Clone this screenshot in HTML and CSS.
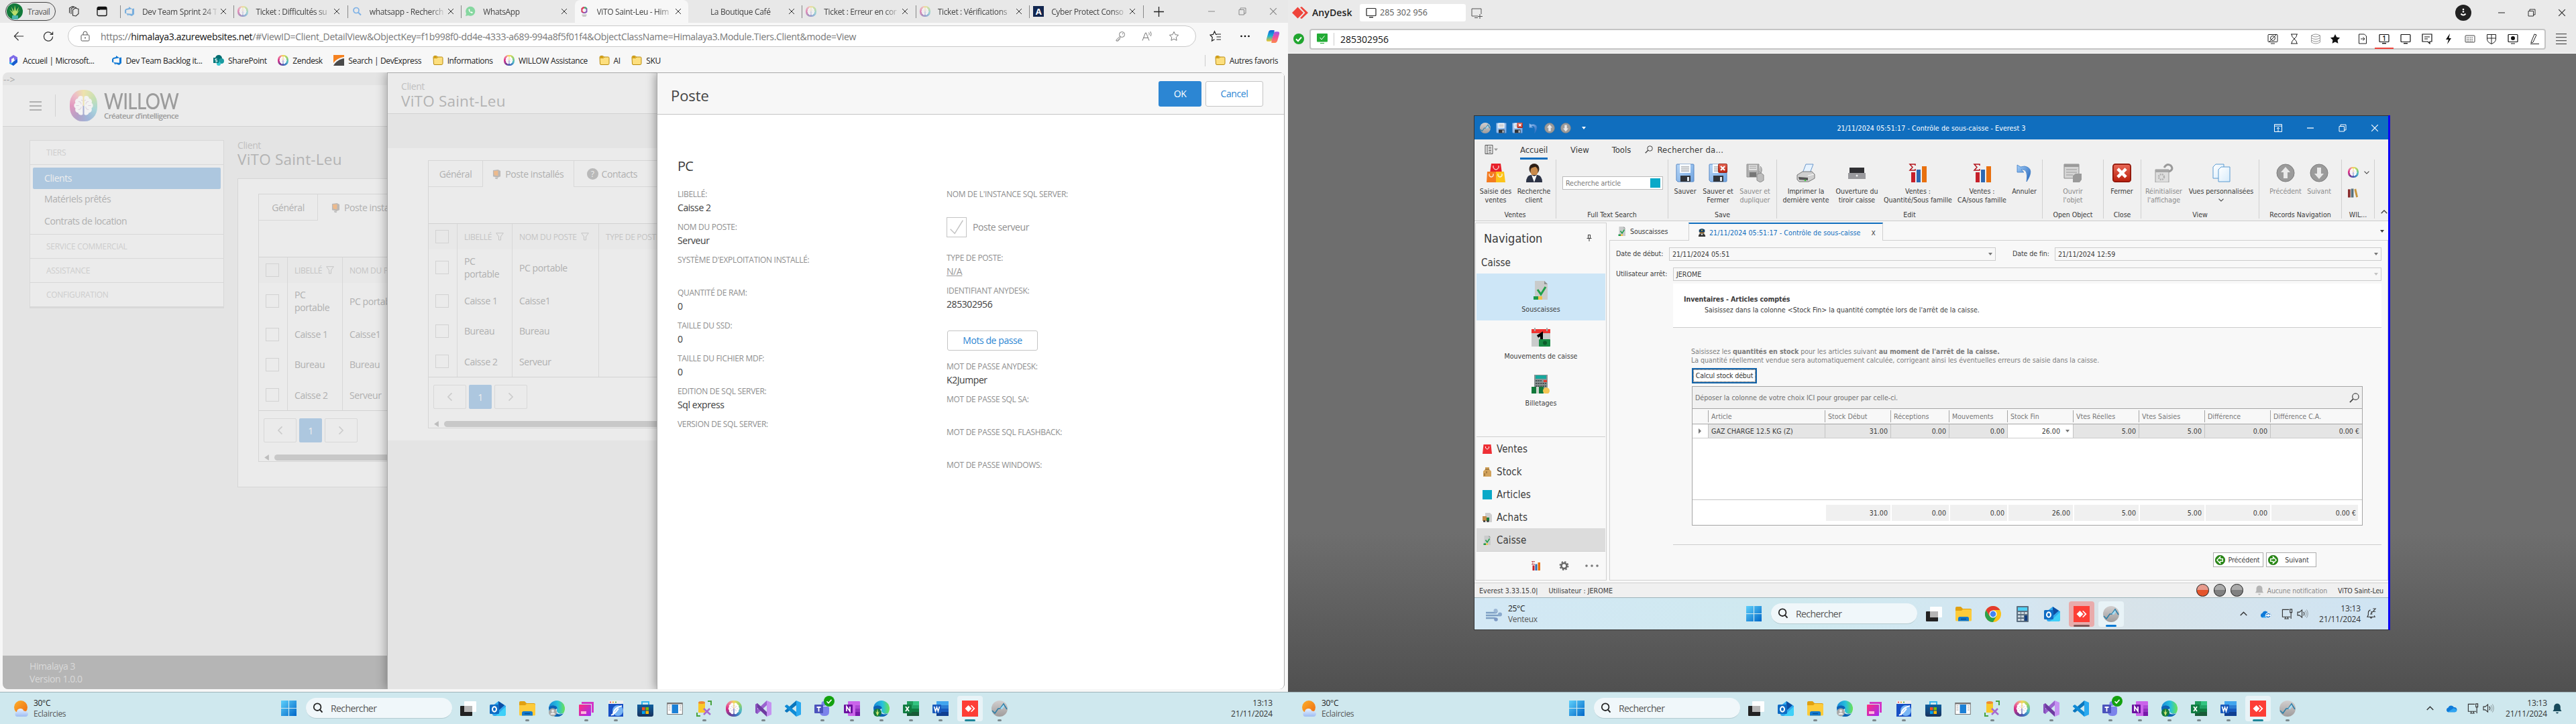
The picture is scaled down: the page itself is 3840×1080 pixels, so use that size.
FILE: index.html
```html
<!DOCTYPE html>
<html lang="fr">
<head>
<meta charset="utf-8">
<title>Himalaya 3 - AnyDesk</title>
<link rel="stylesheet" href="styles.css">
</head>
<body>
<svg class="defs" width="0" height="0">
<defs>
<linearGradient id="gWin" x1="0" y1="0" x2="1" y2="1"><stop offset="0" stop-color="#5ed0fb"/><stop offset="1" stop-color="#0067c8"/></linearGradient>
<linearGradient id="gSun" x1="0" y1="0" x2="1" y2="1"><stop offset="0" stop-color="#fdb02b"/><stop offset="1" stop-color="#ee6a10"/></linearGradient>
<linearGradient id="gCloud" x1="0" y1="0" x2="0" y2="1"><stop offset="0" stop-color="#e9f1ff"/><stop offset="1" stop-color="#9ebdf2"/></linearGradient>
<linearGradient id="gEdge" x1="0" y1="0" x2="1" y2="0"><stop offset="0" stop-color="#1788d8"/><stop offset=".55" stop-color="#27c0dc"/><stop offset="1" stop-color="#6be352"/></linearGradient>
<linearGradient id="gPink" x1="0" y1="0" x2="1" y2="1"><stop offset="0" stop-color="#ff2e7c"/><stop offset="1" stop-color="#a229f5"/></linearGradient>
<linearGradient id="gStore" x1="0" y1="0" x2="0" y2="1"><stop offset="0" stop-color="#0f5f9e"/><stop offset="1" stop-color="#17325e"/></linearGradient>
<linearGradient id="gGrey" x1="0" y1="0" x2="0" y2="1"><stop offset="0" stop-color="#d2cfcf"/><stop offset="1" stop-color="#9f9c9c"/></linearGradient>
<linearGradient id="gFloppy" x1="0" y1="0" x2="1" y2="1"><stop offset="0" stop-color="#b9d8f8"/><stop offset="1" stop-color="#6fa3e0"/></linearGradient>
<linearGradient id="gRed" x1="0" y1="0" x2="0" y2="1"><stop offset="0" stop-color="#ea6a58"/><stop offset="1" stop-color="#b91f0c"/></linearGradient>
<linearGradient id="gUndo" x1="0" y1="0" x2="1" y2="1"><stop offset="0" stop-color="#a5d0fa"/><stop offset="1" stop-color="#1c5fb8"/></linearGradient>
<linearGradient id="gCopA" x1="0" y1="0" x2="0" y2="1"><stop offset="0" stop-color="#1560d8"/><stop offset=".5" stop-color="#18b0d4"/><stop offset="1" stop-color="#f3c62a"/></linearGradient>
<linearGradient id="gCopB" x1="0" y1="0" x2="0" y2="1"><stop offset="0" stop-color="#9a58ec"/><stop offset=".5" stop-color="#f0509a"/><stop offset="1" stop-color="#fd8a4c"/></linearGradient>
<linearGradient id="gPaper" x1="0" y1="0" x2="1" y2="1"><stop offset="0" stop-color="#fff"/><stop offset="1" stop-color="#d6ebfb"/></linearGradient>

<symbol id="x" viewBox="0 0 10 10"><path d="M1 1l8 8M9 1l-8 8" fill="none" stroke="currentColor"/></symbol>
<symbol id="brain" viewBox="0 0 24 24"><path fill="#fff" d="M11.400 4.200c-1.800-1.400-4.200-.4-4.300 1.600-2 .3-3 2.200-2.100 3.900-1.700 1-1.700 3.600 0 4.600-.7 1.900.4 3.700 2.200 3.900.5 2.100 2.900 2.700 4.200 1.400zM12.600 4.200c1.800-1.400 4.200-.4 4.300 1.600 2 .3 3 2.200 2.100 3.900 1.700 1 1.700 3.600 0 4.600.7 1.900-.4 3.700-2.200 3.900-.5 2.100-2.900 2.700-4.200 1.400z"/><path d="M7.500 8.500q2.500 0 2.500 2.500M7.500 15.500q2.500 0 2.500-2.500M16.500 8.500q-2.500 0-2.500 2.500M16.500 15.500q-2.500 0-2.500-2.500M10 7l1.300 1M14 7l-1.300 1M5.500 12H8M18.500 12H16" fill="none" stroke="#c9a9c8" stroke-width=".6"/></symbol>
<symbol id="devops" viewBox="0 0 16 16"><path fill="currentColor" d="M15 3.600v8.600l-3.400 2.800-5.400-2v2L3.200 11l8.700.7V4.200zM12 4.200L7 1v2L2.500 4.300 1 6.200v4.200l2.200 1V5.900z"/></symbol>
<symbol id="folder" viewBox="0 0 16 16"><path d="M1 3.500Q1 1.500 3 1.500h2.500q1 0 1.500 1.500h6.500q1.500 0 1.500 1.500v8q0 2-2 2h-10q-1.500 0-1.500-1.500z" fill="#fddf7e" stroke="#b98a0c"/><path d="M1.500 4.500h5L8 3" stroke="#b98a0c" fill="none"/><path d="M1.500 3q0-1 1-1h3l1 1.500-1 1h-4z" fill="#d9a51b"/></symbol>
<symbol id="back" viewBox="0 0 18 18"><path d="M17 9H2M8.500 2L1.500 9l7 7" fill="none" stroke="currentColor" stroke-width="1.300"/></symbol>
<symbol id="reload" viewBox="0 0 18 18"><path d="M16 9a7 7 0 1 1-2.300-5.200L16 5.500M16 1.500v4.200h-4.200" fill="none" stroke="currentColor" stroke-width="1.300"/></symbol>
<symbol id="lock" viewBox="0 0 14 16"><rect x="1" y="6" width="12" height="9" rx="1.500" fill="none" stroke="currentColor"/><path d="M4 6V4a3 3 0 0 1 6 0v2" fill="none" stroke="currentColor"/><circle cx="7" cy="10.500" r="1" fill="currentColor"/></symbol>
<symbol id="star" viewBox="0 0 18 18"><path d="M9 1.500l2.300 4.900 5.200.7-3.800 3.700.9 5.300L9 13.600l-4.600 2.500.9-5.300L1.500 7.100l5.200-.7z" fill="none" stroke="currentColor" stroke-width="1.100"/></symbol>
<symbol id="starF" viewBox="0 0 18 18"><path d="M9 1l2.500 5.300 5.500.7-4 4 1 5.700L9 14l-5 2.700 1-5.700-4-4 5.500-.7z" fill="currentColor"/></symbol>
<symbol id="favs" viewBox="0 0 18 18"><path d="M11 6.400H9.600L7.500 1.800 5.400 6.400l-4.400.7 3.300 3.700-.8 5.300 4-2.300M11 6h6M10.500 10H17M10.500 14H17" fill="none" stroke="currentColor" stroke-width="1.200"/></symbol>
<symbol id="key" viewBox="0 0 16 16"><circle cx="10.500" cy="5.500" r="4" fill="none" stroke="currentColor"/><path d="M7.600 8.200L2 13.500V15h3v-2h2v-2l1.800-1.800" fill="none" stroke="currentColor"/><circle cx="11.500" cy="4.500" r=".8" fill="currentColor"/></symbol>
<symbol id="aloud" viewBox="0 0 16 16"><path d="M1 14.500L5.500 3h1L11 14.500M2.700 10.500h6.700M10.500 2.500q1.500 2 .3 4M12.800 1q2.400 3.500.5 7" fill="none" stroke="currentColor"/></symbol>
<symbol id="copilot" viewBox="0 0 22 22"><path d="M13 2H8Q5.500 2 4.600 5L2 14q-1 4 2 4h3q2 0 2.600-2L13 5z" fill="url(#gCopA)"/><path d="M9 20h5q2.500 0 3.400-3L20 8q1-4-2-4h-3q-2 0-2.600 2L9 17z" fill="url(#gCopB)"/></symbol>
<symbol id="max" viewBox="0 0 12 12"><path d="M1 3.500h7.500V11H1zM3 3.500V1h8v8H8.500" fill="none" stroke="currentColor"/></symbol>
<symbol id="filter" viewBox="0 0 12 12"><path d="M.7.7h10.600L7.500 6v5h-3V6z" fill="none" stroke="currentColor"/></symbol>
<symbol id="search" viewBox="0 0 18 18"><circle cx="8" cy="7.500" r="6" fill="none" stroke="currentColor" stroke-width="2"/><path d="M12.300 12l4 4.500" stroke="currentColor" stroke-width="2.200"/></symbol>
<symbol id="mag" viewBox="0 0 16 16"><circle cx="10" cy="6" r="5" fill="none" stroke="currentColor" stroke-width="1.300"/><path d="M6.500 9.500L1 15" stroke="currentColor" stroke-width="1.800"/></symbol>
<symbol id="down" viewBox="0 0 6 4"><path d="M0 0h6L3 4z" fill="currentColor"/></symbol>
<symbol id="chev" viewBox="0 0 10 6"><path d="M.7 5.300L5 1l4.300 4.300" fill="none" stroke="currentColor" stroke-width="1.300"/></symbol>
<symbol id="mon" viewBox="0 0 16 16"><rect x="1" y="1.500" width="14" height="11" rx="1" fill="none" stroke="currentColor" stroke-width="1.200"/><path d="M5 14.700h6" stroke="currentColor" stroke-width="1.400"/></symbol>
<symbol id="poste" viewBox="0 0 14 16"><path d="M1 1.500l8-1 4 2v9l-5 2-7-2z" fill="#8d8783"/><path d="M2 3l7-1v8.500L3 9.500z" fill="#f08b30"/><path d="M4 13.500l5 .5-1 1.700-3-.3z" fill="#888"/></symbol>

<symbol id="win" viewBox="0 0 24 24"><path d="M0 0h11.400v11.400H0zM12.600 0H24v11.400H12.600zM0 12.600h11.400V24H0zM12.600 12.600H24V24H12.600z" fill="url(#gWin)"/></symbol>
<symbol id="taskview" viewBox="0 0 24 24"><rect x="0" y="8" width="18" height="15" rx="1" fill="#222"/><rect x="6" y="1" width="18" height="16" rx="1" fill="#fff" opacity=".95"/><rect x="6" y="8" width="12" height="9" fill="#b5b5b5"/></symbol>
<symbol id="outlook" viewBox="0 0 24 24"><path d="M4 8l9-7 11 7v12q0 3-3 3H7q-3 0-3-3z" fill="#2fa9ee"/><path d="M24 9v11q0 3-3 3H9z" fill="#3fd0f8"/><path d="M13 1l9 6-9 8z" fill="#0d4da3"/><rect y="6" width="14" height="14" rx="1.500" fill="#0f6cc4"/><ellipse cx="7" cy="13" rx="3" ry="3.700" fill="none" stroke="#fff" stroke-width="2"/></symbol>
<symbol id="explorer" viewBox="0 0 24 24"><path d="M0 3q0-2 2-2h6l3 3h11q2 0 2 2v4H0z" fill="#e0a011"/><path d="M0 7h9l2-2h11q2 0 2 2v14q0 1.500-2 1.500H2q-2 0-2-1.500z" fill="#fdcb3a"/><path d="M4 22.500v-4q0-2.500 2.500-2.500h11q2.500 0 2.500 2.500v4z" fill="#1179cf"/><path d="M8 19.500h8" stroke="#0a4f8f" stroke-width="1.500"/></symbol>
<symbol id="edge" viewBox="0 0 24 24"><circle cx="12" cy="12" r="12" fill="url(#gEdge)"/><path d="M.2 10Q4 5 10 8q4 2 2 6-1 6 8 5.500 1 0 2-.5-4 6-12 4.900Q1 21 .2 10z" fill="#0d62b4"/><path d="M10 8q5 0 5 4.500-1 2-1 3.500h6q4-1 4-4Q23 7 17 5q-8-2-16 4 5-3 9-1z" fill="url(#gEdge)"/><path d="M12.500 12q-2 6 4 7.500 3 .5 6-1-2 2-5 2-7 0-8-5 0-3 3-3.500z" fill="#d3eef4"/></symbol>
<symbol id="badgeP" viewBox="0 0 24 24"><circle cx="6" cy="17.500" r="6" fill="#a8a8a8"/><circle cx="6" cy="15.500" r="2" fill="#e8e8e8"/><path d="M2.500 21q0-3 3.500-3t3.500 3" fill="#e8e8e8"/></symbol>
<symbol id="badgeL" viewBox="0 0 24 24"><circle cx="6" cy="18" r="6" fill="#147a3c"/><path d="M6 23l-3-7 2 2 1-6 1 6 2-2z" fill="#cde870"/></symbol>
<symbol id="pink" viewBox="0 0 24 24"><path d="M5 2h18v16h-3V5H5z" fill="#d436c8"/><rect x="1" y="6" width="18" height="17" rx="1" fill="url(#gPink)"/><path d="M4 16h8v4H4z" fill="#ffb5dd"/></symbol>
<symbol id="globe" viewBox="0 0 24 24"><rect x="1" y="0" width="22" height="24" fill="#174fc4"/><rect x="1" width="22" height="5" fill="#eee"/><circle cx="4" cy="2.500" r="1" fill="#e33"/><circle cx="8" cy="2.500" r="1" fill="#e90"/><circle cx="12" cy="2.500" r="1" fill="#3a3"/><circle cx="15" cy="15" r="8" fill="#78b5f4"/><path d="M8 22q0-11 13-14M5 22l6-4 5-6" fill="none" stroke="#fff" stroke-width="2"/></symbol>
<symbol id="store" viewBox="0 0 24 24"><path d="M7 6V2h10v4" fill="none" stroke="#35b6ee" stroke-width="2"/><path d="M0 6h24v15q0 3-3 3H3q-3 0-3-3z" fill="url(#gStore)"/><path d="M7 10h4.500v4.500H7z" fill="#f25022"/><path d="M12.500 10H17v4.500h-4.500z" fill="#7fba00"/><path d="M7 15.500h4.500V20H7z" fill="#00a4ef"/><path d="M12.500 15.500H17V20h-4.500z" fill="#ffb900"/></symbol>
<symbol id="winapp" viewBox="0 0 24 24"><rect x=".7" y="3.500" width="22.600" height="17" fill="#fff" stroke="#777"/><path d="M.7 4.500h22.600" stroke="#777" stroke-width="2"/><rect x="7.500" y="6" width="9.500" height="13" fill="#1b80d6"/><path d="M2.500 8h3M2.500 11h3M2.500 14h3M19 8h2.500M19 11h2.500M19 14h2.500" stroke="#999"/></symbol>
<symbol id="dbtool" viewBox="0 0 24 24"><path d="M3 3h10v15H3z" fill="#f9c929"/><ellipse cx="8" cy="3" rx="5" ry="2" fill="#ef8a31"/><path d="M17 1h5v6M1 18v5h5" fill="none" stroke="#48a23f" stroke-width="2"/><path d="M11 12l10 9M20 12l-9 9" stroke="#a76bd0" stroke-width="2.500"/></symbol>
<symbol id="vs" viewBox="0 0 24 24"><path d="M17 0l7 3v18l-7 3z" fill="#c592f1"/><path d="M17 0v7L3 20l-3-2V16z" fill="#9a63cf"/><path d="M17 24v-7L3 4 0 6v2z" fill="#6d3ba0"/><path d="M0 6v12l3 2V4z" fill="#8750bd"/></symbol>
<symbol id="vscode" viewBox="0 0 24 24"><path d="M17 0l7 3v18l-7 3z" fill="#29a9f0"/><path d="M17 0v7L3 18l-3-2V15z" fill="#0a76bd"/><path d="M17 24v-7L3 6 0 8v1z" fill="#0f8bd6"/></symbol>
<symbol id="teams" viewBox="0 0 24 24"><circle cx="14" cy="4.500" r="3.500" fill="#7b83eb"/><path d="M8 9h12q2 0 2 2v6q0 6-7 6t-7-6z" fill="#7b83eb"/><rect y="6" width="13" height="13" rx="1" fill="#4b53bc"/><path d="M3.500 10h6M6.500 10v6.500" stroke="#fff" stroke-width="1.800"/></symbol>
<symbol id="teamsOk" viewBox="0 0 16 16"><circle cx="8" cy="8" r="8" fill="#13a10e"/><path d="M4.500 8.300l2.500 2.500 4.500-5" fill="none" stroke="#fff" stroke-width="1.600"/></symbol>
<symbol id="onenote" viewBox="0 0 24 24"><rect x="6" y="1" width="18" height="22" rx="1" fill="#ca64ea"/><path d="M17 7h7v5h-7z" fill="#ae4bd5"/><path d="M17 12h7v5h-7z" fill="#9332bf"/><path d="M17 17h7v6h-7z" fill="#7719aa"/><rect y="6" width="13" height="13" rx="1" fill="#6b12a0"/><path d="M4 16V9l5 7V9" fill="none" stroke="#fff" stroke-width="1.700"/></symbol>
<symbol id="excel" viewBox="0 0 24 24"><path d="M6 1h9v22H6z" fill="#1f9b5c"/><path d="M15 1h9v6h-9z" fill="#33c481"/><path d="M6 7h18v5H6z" fill="#21a366"/><path d="M6 12h18v5H6z" fill="#107c41"/><path d="M6 17h18v6H6z" fill="#185c37"/><rect y="6" width="13" height="13" rx="1" fill="#107c41"/><path d="M4 9l5 7M9 9l-5 7" stroke="#fff" stroke-width="1.800"/></symbol>
<symbol id="word" viewBox="0 0 24 24"><path d="M6 1h18v6H6z" fill="#41a5ee"/><path d="M6 7h18v5H6z" fill="#2b7cd3"/><path d="M6 12h18v5H6z" fill="#185abd"/><path d="M6 17h18v6H6z" fill="#103f91"/><rect y="6" width="13" height="13" rx="1" fill="#185abd"/><path d="M2.500 9l2 7 2-6 2 6 2-7" fill="none" stroke="#fff" stroke-width="1.600"/></symbol>
<symbol id="any" viewBox="0 0 24 24"><rect width="24" height="24" fill="#fd3e36"/><path d="M4.500 12l5-5 5 5-5 5zM13 7.500L14.500 7l5 5-5 5-1.500-.5L17 12z" fill="#fff"/></symbol>
<symbol id="everest" viewBox="0 0 24 24"><circle cx="12" cy="12" r="12" fill="url(#gGrey)"/><path d="M1 15l4 4 5-7h3l5-7 5 8" fill="none" stroke="#2b7fa8" stroke-width="1.600"/><path d="M13 12l5-6 1 3-3 4z" fill="#a4dcf5"/></symbol>
<symbol id="sunny" viewBox="0 0 24 24"><circle cx="11" cy="10" r="10" fill="url(#gSun)"/><path d="M5 24a4 4 0 0 1 0-7.500 5.500 5.500 0 0 1 10.500-1q5 0 6.500 4-.5 4.500-4 4.500z" fill="url(#gCloud)"/></symbol>
<symbol id="wind" viewBox="0 0 24 24"><path d="M0 10h14q2.500 0 2.500-3M0 14h19q3-.5 3-2.500M0 18h13q2 .5 3 3" fill="none" stroke="#7e9fc4" stroke-width="2.400"/><circle cx="14.500" cy="7" r="3" fill="#9db8d6"/><circle cx="21" cy="12.500" r="3" fill="#8aa9cc"/><circle cx="15" cy="20" r="2.800" fill="#7b98c4"/></symbol>
<symbol id="chrome" viewBox="0 0 24 24"><circle cx="12" cy="12" r="12" fill="#fbc116"/><path d="M1.600 6A12 12 0 0 1 22.400 6H12z" fill="#e33b2e"/><path d="M1.600 6A12 12 0 0 0 12 24l5-9-10 0z" fill="#2ba24c"/><path d="M1.600 6L7 15l5-9z" fill="#e33b2e"/><circle cx="12" cy="12" r="5.600" fill="#fff"/><circle cx="12" cy="12" r="4.400" fill="#4285f4"/></symbol>
<symbol id="calc" viewBox="0 0 24 24"><rect x="3" width="18" height="24" rx="1" fill="#5c6f80"/><rect x="5" y="2" width="14" height="5" fill="#4fd0f5"/><path d="M5 9h4v3H5zM10 9h4v3h-4zM15 9h4v3h-4zM5 14h4v3H5zM10 14h4v3h-4zM5 19h4v3H5zM10 19h4v3h-4z" fill="#c9d4dc"/><path d="M15 14h4v8h-4z" fill="#123c7e"/></symbol>
<symbol id="cloud" viewBox="0 0 18 12"><path d="M4 11.500a3.700 3.700 0 0 1-.3-7.200A5 5 0 0 1 12.700 4a3.800 3.800 0 0 1 1.800 7.500z" fill="#0f7ad8"/><path d="M3 11.500L12 5.500q5 .5 5 4-.5 2-2.500 2z" fill="#2ea4f2"/></symbol>
<symbol id="sync" viewBox="0 0 18 12"><circle cx="13" cy="8" r="4.500" fill="#fff"/><path d="M10 7.500q3-4 6-.5M16 9q-3 3.500-6 .5" fill="none" stroke="#0f6cc4" stroke-width="1.400"/></symbol>
<symbol id="net" viewBox="0 0 18 18"><path d="M12 2.500H1.500V14H14M4.500 17h7M6 14v3M10 14v3M13.500 2h3v5h-3zM15 7v10" fill="none" stroke="currentColor" stroke-width="1.200"/></symbol>
<symbol id="snd" viewBox="0 0 18 16"><path d="M1 5.500h3L8 2v12l-4-3.500H1z" fill="none" stroke="currentColor" stroke-width="1.200"/><path d="M10.500 5q2 3 0 6" fill="none" stroke="currentColor" stroke-width="1.200"/><path d="M13 3.200q3.500 4.800 0 9.600M15.300 1.500q4 6.500 0 13" fill="none" stroke="currentColor" opacity=".45"/></symbol>
<symbol id="bell" viewBox="0 0 14 16"><path d="M7 .5a4.800 4.800 0 0 1 4.800 4.800V9L13.500 12H.5L2.200 9V5.300A4.800 4.800 0 0 1 7 .5zM5 13.500h4q-.5 2-2 2t-2-2z" fill="currentColor"/></symbol>
<symbol id="bellz" viewBox="0 0 16 18"><path d="M6 3Q2.500 4 2.500 8v3L1 14h12l-1-2M5.500 14.500q1.500 3 3 0M10 1h4l-4 4.500h4M6.500 6H9L6.500 9.500H9" fill="none" stroke="currentColor" stroke-width="1.200"/></symbol>

<symbol id="floppy" viewBox="0 0 28 28"><path d="M2 1h24q1 0 1 1v24q0 1-1 1H3l-2-2V2q0-1 1-1z" fill="url(#gFloppy)" stroke="#5486c4"/><path d="M6 1h16v13H6z" fill="#f6fafe"/><path d="M8 5h12M8 8h12M8 11h12" stroke="#8a8a8a"/><path d="M7 18h15v9H7z" fill="#30343a"/><path d="M17 20h3v6h-3z" fill="#dfe7ee"/></symbol>
<symbol id="floppyG" viewBox="0 0 28 28"><path d="M2 1h18v19H2z" fill="#b0b0b0" stroke="#8f8f8f"/><path d="M5 2h12v8H5z" fill="#e2e2e2"/><path d="M6 4h10M6 7h10" stroke="#999"/><path d="M6 13h10v7H6z" fill="#777"/><path d="M22 4q4 4 1 10l-3-2M17 16l6-2 4 3v8l-5 3-5-3z" fill="#bcbcbc" stroke="#8c8c8c"/></symbol>
<symbol id="rx" viewBox="0 0 16 16"><rect x=".5" y=".5" width="15" height="15" rx="2" fill="url(#gRed)" stroke="#8f1508"/><path d="M4.500 4.500l7 7M11.500 4.500l-7 7" stroke="#fff" stroke-width="2.600"/></symbol>
<symbol id="bags" viewBox="0 0 28 28"><path d="M7 0h14l2 14H5z" fill="#e8202a"/><path d="M1 12h13v16H0z" fill="#f47b20"/><path d="M14 12h12l2 16H14z" fill="#fcc419"/><path d="M10 3v3q4 6 8 0V3M4 15v3q3 4 6 0v-3M17 15v3q3 4 6 0v-3" fill="none" stroke="#fff" stroke-opacity=".8" stroke-width="1.300"/></symbol>
<symbol id="client" viewBox="0 0 28 28"><ellipse cx="14" cy="8" rx="7.500" ry="8" fill="#3a2a20"/><ellipse cx="14" cy="11.500" rx="5.500" ry="7" fill="#c98a4b"/><path d="M7 7q7-1 9-3 3 3 5 3-1-6-7-6T7 7z" fill="#2c1e16"/><path d="M2 28q0-10 7-11h10q7 1 7 11z" fill="#2c3346"/><path d="M10 17l4 11 4-11-4 2z" fill="#fff"/></symbol>
<symbol id="printer" viewBox="0 0 28 28"><path d="M9 14L14 1h11l-5 13z" fill="#e7f3ff" stroke="#6a97c9"/><path d="M1 17l8-5h14l4 4v6l-9 5H4l-3-3z" fill="#cfcfcf" stroke="#777"/><path d="M3 20l14 1v4L4 24z" fill="#555"/><path d="M17 18l9-2" stroke="#fff"/><circle cx="13" cy="25" r="1.200" fill="#3c3"/></symbol>
<symbol id="drawer" viewBox="0 0 28 28"><path d="M3 6h22v8H3z" fill="#2f2f33"/><path d="M1 14h26v9H1z" fill="#9a9a9e"/><circle cx="14" cy="18" r="1.500" fill="#eee"/></symbol>
<symbol id="stats" viewBox="0 0 28 28"><path d="M10 3V1H2l4 4.500L2 10h8V8" fill="none" stroke="#b3121b" stroke-width="1.500"/><rect x="4" y="13" width="6" height="15" fill="#c6202a"/><rect x="12" y="9" width="6" height="19" fill="#2d68b2"/><rect x="20" y="4" width="7" height="24" fill="#e8700f"/></symbol>
<symbol id="undo" viewBox="0 0 28 28"><path d="M3 2v11h10L9 9q11-2 8 18 13-20-3-23L8 5z" fill="url(#gUndo)" stroke="#3f7cc4" stroke-width=".8"/></symbol>
<symbol id="obj" viewBox="0 0 28 28"><path d="M1 1h22v21H1z" fill="#d5d5d5" stroke="#8a8a8a"/><path d="M1 1h22v4H1z" fill="#9b9b9b"/><path d="M4 9h16M4 13h16M4 17h10" stroke="#999"/><path d="M14 18l4-3h9v9l-3 4H14z" fill="#9a9a9a"/></symbol>
<symbol id="reset" viewBox="0 0 28 28"><path d="M1 9h20v19H1z" fill="#dedede" stroke="#999"/><path d="M1 9h20v4H1z" fill="#a7a7a7"/><circle cx="10" cy="20" r="4" fill="none" stroke="#b2b2b2" stroke-width="2.500" stroke-dasharray="2 1.200"/><path d="M14 6q4-7 10-3 5 6-3 9" fill="none" stroke="#9a9a9a" stroke-width="3"/></symbol>
<symbol id="pages" viewBox="0 0 28 28"><path d="M2 5l4-4h12v21H2z" fill="url(#gPaper)" stroke="#5b9ad0"/><path d="M10 9l4-4h13v22H10z" fill="url(#gPaper)" stroke="#5b9ad0"/></symbol>
<symbol id="upG" viewBox="0 0 28 28"><circle cx="14" cy="14" r="13" fill="#9b9b9b" stroke="#7c7c7c"/><path d="M14 5l7 8h-4v9h-6v-9H7z" fill="#e9e9e9"/></symbol>
<symbol id="books" viewBox="0 0 16 14"><path d="M0 1h4v13H0z" fill="#8a3030"/><path d="M5 0h4v14H5z" fill="#56707c"/><path d="M10 1l3-1 3 13-3 1z" fill="#c9973d"/></symbol>
<symbol id="sheet" viewBox="0 0 28 28"><path d="M5 0h14l5 5v23H5z" fill="#c9cbcb"/><path d="M19 0l5 5h-5z" fill="#8d9090"/><path d="M9 13l5 7 7-11" fill="none" stroke="#21a04a" stroke-width="3"/><path d="M3 23h7v5H3z" fill="#1c9947"/><path d="M10 23h6v5h-6z" fill="#f1c14b"/></symbol>
<symbol id="cal" viewBox="0 0 28 28"><path d="M0 2h28v26H0z" fill="#c9cbcb"/><path d="M0 2h28v6H0z" fill="#ee3330"/><path d="M5 0v5M23 0v5" stroke="#aaa" stroke-width="2"/><path d="M9 13l6-4v18" fill="none" stroke="#000" stroke-width="4"/><rect x="11" y="17" width="17" height="11" rx="1" fill="#178a43"/><circle cx="20" cy="22.500" r="3" fill="#0c5c2b"/></symbol>
<symbol id="bill" viewBox="0 0 28 28"><path d="M4 0h20v22H4z" fill="#8a9494"/><path d="M6 1h16v5H6z" fill="#16a89e"/><path d="M6 9h9M6 13h16M6 17h16" stroke="#4a5454" stroke-width="2" stroke-dasharray="2.500 1"/><path d="M18 8h5v3h-5z" fill="#e83b2e"/><path d="M0 18h18v10H0z" fill="#12793b"/><path d="M7 18h4v10H7z" fill="#cfd6cf"/><circle cx="22" cy="24" r="5" fill="#f4c655"/></symbol>
<symbol id="bag" viewBox="0 0 14 14"><path d="M1.500 0h11L14 14H0z" fill="#ee2f35"/><path d="M4.500 3v2q2.500 4 5 0V3" fill="none" stroke="#fff"/></symbol>
<symbol id="sack" viewBox="0 0 14 14"><path d="M4 0h6v3l3 3v8H1V6l3-3z" fill="#d2a35c"/><path d="M4 3h6M3 9v4M6 6v3" stroke="#7d5724"/></symbol>
<symbol id="truck" viewBox="0 0 14 14"><path d="M4 0h7l3 3v11H4z" fill="#cfcfcf"/><path d="M0 5h6v7H0z" fill="#c48c4a"/><path d="M6 7h4v5H6z" fill="#1c7c3e"/><circle cx="2.500" cy="12.500" r="1.500" fill="#333"/><circle cx="8" cy="12.500" r="1.500" fill="#333"/></symbol>
<symbol id="gear" viewBox="0 0 14 14"><circle cx="7" cy="7" r="4" fill="none" stroke="#666" stroke-width="2.600"/><circle cx="7" cy="7" r="6" fill="none" stroke="#666" stroke-width="1.800" stroke-dasharray="2.500 2.200"/></symbol>
<symbol id="pin" viewBox="0 0 8 10"><path d="M2 .5h4M2.500.5v5M5.500.5v5M.5 5.500h7M4 5.500V10" stroke="currentColor" fill="none"/></symbol>
<symbol id="police" viewBox="0 0 14 14"><path d="M2 2q5-4 10 0v4H2z" fill="#123e63"/><circle cx="7" cy="3" r="1.200" fill="#f1c232"/><path d="M3 6h8v3H3z" fill="#7b5a2a"/><path d="M1 14q0-5 4-5h4q4 0 4 5z" fill="#333"/><path d="M5 9l2 3 2-3z" fill="#eee"/></symbol>
<symbol id="green" viewBox="0 0 16 16"><circle cx="8" cy="8" r="7.500" fill="#2b8f17" stroke="#1c650e"/><path d="M3 8l5-5v3h4v4H8v3z" fill="none" stroke="#fff" stroke-width="1.500"/></symbol>
</defs>
</svg>

<div class="monitor">
  <div class="tabstrip">
    <div class="profile"><svg class="leaf" viewBox="0 0 24 24"><circle cx="12" cy="12" r="12" fill="#127a3a"/><path d="M12 20L4 9l5 4-2-8 4 7 1-9 2 9 4-7-2 8 4-4z" fill="#b9dd6c"/><path d="M8 18h9v6H8z" fill="#4cb5ad"/></svg><span>Travail</span></div>
    <svg class="ws" viewBox="0 0 16 16"><path d="M6.500 5.500l4-2.500 4.500 1.500v7l-4 3.500-4.500-1zM4 12V4l4-2.500 4 1M1.500 10.500V3L6 .7l3 .6" fill="none" stroke="#333" stroke-width="1.100"/></svg>
    <svg class="vt" viewBox="0 0 16 16"><rect x="1" y="1.500" width="14" height="13" rx="2" fill="none" stroke="#111" stroke-width="1.300"/><path d="M1 2h14v3.500H1zM1 2h4v4H1z" fill="#111"/></svg>
    <div class="tab"><svg class="i16 c-dev dim"><use href="#devops"/></svg><span>Dev Team Sprint 24 T</span><svg class="cx"><use href="#x"/></svg></div>
    <div class="tab"><i class="wl i16 dim"><svg><use href="#brain"/></svg></i><span>Ticket : Difficultés su</span><svg class="cx"><use href="#x"/></svg></div>
    <div class="tab"><svg class="i16" viewBox="0 0 16 16"><circle cx="7" cy="6.500" r="4" fill="none" stroke="#7fb2e6" stroke-width="1.700"/><path d="M10 9.500l4 4" stroke="#7fb2e6" stroke-width="2"/></svg><span>whatsapp - Recherch</span><svg class="cx"><use href="#x"/></svg></div>
    <div class="tab"><svg class="i16" viewBox="0 0 16 16"><path d="M1 15l1-4a7 7 0 1 1 3 3z" fill="#86d7a0"/><path d="M5.500 5q0 4.500 5.500 6l.8-1.800-2-1-1 .8Q7.500 8 7 7l.7-1-1-1.700z" fill="#fff"/></svg><span>WhatsApp</span><svg class="cx"><use href="#x"/></svg></div>
    <div class="tab on"><svg class="i16 big" viewBox="0 0 16 18"><path d="M3 4q5-5 10 0v6q-5 5-10 0z" fill="#8a55b8"/><path d="M3 4q5-5 5-1v8q-5 0-5-2z" fill="#e0405a"/><path d="M13 4q-3-4-5-2v3z" fill="#39b66b"/><circle cx="8" cy="7" r="3" fill="#f3f3f3"/><path d="M4 15h8M5 17h6" stroke="#999"/></svg><span>ViTO Saint-Leu - Him</span><svg class="cx"><use href="#x"/></svg></div>
    <div class="tab nosep"><i class="i16"></i><span>La Boutique Café</span><svg class="cx"><use href="#x"/></svg></div>
    <div class="tab"><i class="wl i16 dim"><svg><use href="#brain"/></svg></i><span>Ticket : Erreur en cor</span><svg class="cx"><use href="#x"/></svg></div>
    <div class="tab"><i class="wl i16 dim"><svg><use href="#brain"/></svg></i><span>Ticket : Vérifications</span><svg class="cx"><use href="#x"/></svg></div>
    <div class="tab"><b class="acro i16">A</b><span>Cyber Protect Conso</span><svg class="cx"><use href="#x"/></svg></div>
    <div class="newtab"><svg viewBox="0 0 14 14"><path d="M7 0v14M0 7h14" stroke="#222" stroke-width="1.200"/></svg></div>
    <div class="wbtns"><svg viewBox="0 0 12 12"><path d="M1 6h10" stroke="currentColor"/></svg><svg><use href="#max"/></svg><svg><use href="#x"/></svg></div>
  </div>
  <div class="toolbar">
    <svg class="t-back"><use href="#back"/></svg><svg class="t-rel"><use href="#reload"/></svg>
    <div class="addr"><svg class="lk"><use href="#lock"/></svg><p>https://<b>himalaya3.azurewebsites.net</b>/#ViewID=Client_DetailView&amp;ObjectKey=f1b998f0-dd4e-4333-a689-994a8f5f01f4&amp;ObjectClassName=Himalaya3.Module.Tiers.Client&amp;mode=View</p><svg><use href="#key"/></svg><svg><use href="#aloud"/></svg><svg><use href="#star"/></svg></div>
    <svg class="t-fav"><use href="#favs"/></svg><svg class="t-dot" viewBox="0 0 16 4"><circle cx="2.500" cy="2" r="1.300"/><circle cx="8" cy="2" r="1.300"/><circle cx="13.500" cy="2" r="1.300"/></svg><svg class="t-cop"><use href="#copilot"/></svg>
  </div>
  <div class="bookmarks">
    <a class="first"><svg viewBox="0 0 16 16"><path d="M8 0l6 3.500v6L9 7V4L5 6v6l-3-2V4z" fill="#7d6be8"/><path d="M2 10l3 2 5-3 4 1-6 6-6-3z" fill="#2aa7ea"/><path d="M9 9l5-3v5l-6 5-3-2z" fill="#1b5bd0"/></svg>Accueil | Microsoft...</a>
    <a><svg class="c-dev"><use href="#devops"/></svg>Dev Team Backlog it...</a>
    <a><svg viewBox="0 0 16 16"><circle cx="8" cy="5" r="5" fill="#036c70"/><circle cx="12" cy="9" r="4" fill="#1a9ba1"/><circle cx="8" cy="13" r="3" fill="#37c6d0"/><path d="M0 4h8v8H0z" fill="#03787c"/><path d="M5.500 6H3v2h2.500v2.200H3" fill="none" stroke="#fff"/></svg>SharePoint</a>
    <a><i class="wl"><svg><use href="#brain"/></svg></i>Zendesk</a>
    <a><svg viewBox="0 0 16 16"><path d="M0 0h16v3Q6 4 0 12z" fill="#f58220"/><path d="M16 5v11H0Q5 7 16 5z" fill="#4a4a4a"/></svg>Search | DevExpress</a>
    <a><svg><use href="#folder"/></svg>Informations</a>
    <a><i class="wl"><svg><use href="#brain"/></svg></i>WILLOW Assistance</a>
    <a><svg><use href="#folder"/></svg>AI</a>
    <a><svg><use href="#folder"/></svg>SKU</a>
    <a class="other"><svg><use href="#folder"/></svg>Autres favoris</a>
  </div>
  <div class="page">
    <div class="arrow">--&gt;</div>
    <div class="phead"><svg class="burger" viewBox="0 0 18 16"><path d="M0 2h18M0 8h18M0 14h18" stroke="#b0b0b0" stroke-width="2"/></svg><i class="vr"></i><i class="wl logo"><svg><use href="#brain"/></svg></i><div class="brand"><b>WILLOW</b><span>Créateur d’intelligence</span></div></div>
    <div class="pmain">
      <nav class="side"><h6>TIERS</h6><a class="on">Clients</a><a>Matériels prêtés</a><a class="last">Contrats de location</a><h6>SERVICE COMMERCIAL</h6><h6>ASSISTANCE</h6><h6>CONFIGURATION</h6></nav>
      <section class="detail">
        <small>Client</small><h2>ViTO Saint-Leu</h2>
        <div class="panel"><div class="box">
          <div class="ptabs"><span>Général</span><span class="cur"><svg><use href="#poste"/></svg>Poste installés</span></div>
          <div class="tbl">
            <div class="th"><i></i></div><div class="th">LIBELLÉ<svg><use href="#filter"/></svg></div><div class="th">NOM DU POSTE</div><div class="th"></div>
            <div><i></i></div><div>PC<br>portable</div><div>PC portable</div><div></div>
            <div><i></i></div><div>Caisse 1</div><div>Caisse1</div><div></div>
            <div><i></i></div><div>Bureau</div><div>Bureau</div><div></div>
            <div><i></i></div><div>Caisse 2</div><div>Serveur</div><div></div>
          </div>
          <div class="pager"><span><svg class="l"><use href="#chev"/></svg></span><b>1</b><span><svg class="r"><use href="#chev"/></svg></span></div>
          <div class="hscroll"><svg viewBox="0 0 6 8"><path d="M6 0v8L0 4z" fill="#bdbdbd"/></svg><i></i></div>
        </div></div>
      </section>
    </div>
    <footer>Himalaya 3<br>Version 1.0.0</footer>

    <div class="pop2">
      <header><small>Client</small><h2>ViTO Saint-Leu</h2></header>
      <div class="panel"><div class="box">
          <div class="ptabs"><span>Général</span><span class="cur"><svg><use href="#poste"/></svg>Poste installés</span><span class="ct"><em>?</em>Contacts</span></div>
          <div class="tbl">
            <div class="th"><i></i></div><div class="th">LIBELLÉ<svg><use href="#filter"/></svg></div><div class="th">NOM DU POSTE<svg><use href="#filter"/></svg></div><div class="th">TYPE DE POSTE</div>
            <div><i></i></div><div>PC<br>portable</div><div>PC portable</div><div></div>
            <div><i></i></div><div>Caisse 1</div><div>Caisse1</div><div></div>
            <div><i></i></div><div>Bureau</div><div>Bureau</div><div></div>
            <div><i></i></div><div>Caisse 2</div><div>Serveur</div><div></div>
          </div>
          <div class="pager"><span><svg class="l"><use href="#chev"/></svg></span><b>1</b><span><svg class="r"><use href="#chev"/></svg></span></div>
          <div class="hscroll"><svg viewBox="0 0 6 8"><path d="M6 0v8L0 4z" fill="#bdbdbd"/></svg><i></i></div>
      </div></div>
    </div>

    <div class="pop3">
      <header><h2>Poste</h2><button class="ok">OK</button><button>Cancel</button></header>
      <h3>PC</h3>
      <div class="form">
        <dl><dt>LIBELLÉ:</dt><dd>Caisse 2</dd><dt>NOM DU POSTE:</dt><dd>Serveur</dd><dt>SYSTÈME D'EXPLOITATION INSTALLÉ:</dt><dd></dd><dt>QUANTITÉ DE RAM:</dt><dd>0</dd><dt>TAILLE DU SSD:</dt><dd>0</dd><dt>TAILLE DU FICHIER MDF:</dt><dd>0</dd><dt>EDITION DE SQL SERVER:</dt><dd>Sql express</dd><dt>VERSION DE SQL SERVER:</dt></dl>
        <dl><dt>NOM DE L'INSTANCE SQL SERVER:</dt><dd class="gap1"></dd><dd class="chk"><svg viewBox="0 0 30 30"><path d="M5 18l7 7L25 4" fill="none" stroke="#c4c4c4" stroke-width="1.600"/></svg>Poste serveur</dd><dt>TYPE DE POSTE:</dt><dd><u>N/A</u></dd><dt>IDENTIFIANT ANYDESK:</dt><dd>285302956</dd><dd class="pw"><button>Mots de passe</button></dd><dt>MOT DE PASSE ANYDESK:</dt><dd>K2Jumper</dd><dt>MOT DE PASSE SQL SA:</dt><dd></dd><dt>MOT DE PASSE SQL FLASHBACK:</dt><dd></dd><dt>MOT DE PASSE WINDOWS:</dt></dl>
      </div>
    </div>
  </div>
  <div class="taskbar local">
    <svg class="wi"><use href="#sunny"/></svg><div class="wt"><b>30°C</b><br>Eclaircies</div>
    <svg class="start"><use href="#win"/></svg><div class="sbox"><svg><use href="#search"/></svg>Rechercher</div>
    <div class="apps"><a><svg><use href="#taskview"/></svg></a><a><svg><use href="#outlook"/></svg></a><a class="r"><svg><use href="#explorer"/></svg></a><a><svg viewBox="0 0 24 24"><use href="#edge"/><use href="#badgeP"/></svg></a><a class="r"><svg><use href="#pink"/></svg></a><a class="r"><svg><use href="#globe"/></svg></a><a><svg><use href="#store"/></svg></a><a><svg><use href="#winapp"/></svg></a><a class="r"><svg><use href="#dbtool"/></svg></a><a><i class="wl"><svg><use href="#brain"/></svg></i></a><a class="r"><svg><use href="#vs"/></svg></a><a><svg><use href="#vscode"/></svg></a><a class="r"><svg><use href="#teams"/></svg><svg class="okb"><use href="#teamsOk"/></svg></a><a class="r"><svg><use href="#onenote"/></svg></a><a class="r"><svg viewBox="0 0 24 24"><use href="#edge"/><use href="#badgeL"/></svg></a><a class="r"><svg><use href="#excel"/></svg></a><a class="r"><svg><use href="#word"/></svg></a><a class="r on"><svg><use href="#any"/></svg></a><a class="r"><svg><use href="#everest"/></svg></a></div>
    <div class="tray"><div class="clock">13:13<br>21/11/2024</div></div>
  </div>
</div>

<div class="monitor any">
  <div class="atitle"><svg class="alogo" viewBox="0 0 24 18"><path d="M0 9l8.500-8.500L17 9l-8.500 8.500zM12 1l2.500-1L24 9l-9.500 9L12 17l7.500-8z" fill="#ef443b"/></svg><b>AnyDesk</b><div class="atab"><svg><use href="#mon"/></svg>285 302 956</div><svg class="anew" viewBox="0 0 17 16"><path d="M10 12H1V1h14v8M5 14.500h5M13 9v7M10 12.500h7" fill="none" stroke="#555"/></svg>
    <div class="aw"><svg class="ava" viewBox="0 0 24 24"><circle cx="12" cy="12" r="12" fill="#222"/><circle cx="12" cy="7" r="1.300" fill="#fff"/><circle cx="12" cy="10.500" r="1.300" fill="#fff"/><path d="M8.500 13.500q3.500 4 7 0" fill="none" stroke="#fff" stroke-width="2"/></svg><svg viewBox="0 0 12 12"><path d="M1 6h10" stroke="#222"/></svg><svg><use href="#max"/></svg><svg><use href="#x"/></svg></div></div>
  <div class="abar"><svg class="aok" viewBox="0 0 16 16"><circle cx="8" cy="8" r="8" fill="#1fa52e"/><path d="M4 8.200l3 3 5-5.700" fill="none" stroke="#fff" stroke-width="2"/></svg>
    <div class="ain"><svg class="gm" viewBox="0 0 16 16"><rect width="16" height="12.500" rx="1" fill="#23ab35"/><path d="M4.500 6l2.500 3 4.500-5.500" fill="none" stroke="#fff"/><path d="M5 14.500h6" stroke="#23ab35"/></svg><span>285302956</span>
      <div class="aic"><svg viewBox="0 0 16 16"><rect x="1" y="1.500" width="14" height="11" rx="1" fill="none" stroke="#222"/><circle cx="8" cy="7" r="3.500" fill="none" stroke="#222"/><path d="M3 12L13 2M5 15h6" stroke="#222"/></svg><svg viewBox="0 0 16 16"><path d="M3 1h10M3 15h10M4 1q0 4 4 7-4 3-4 7M12 1q0 4-4 7 4 3 4 7" fill="none" stroke="#222"/></svg><svg viewBox="0 0 16 16"><path d="M1.500 3q6.500-4 13 0v10q-6.500 4-13 0zM1.500 3q6.500 4 13 0M1.500 6.500q6.500 4 13 0M1.500 10q6.500 4 13 0" fill="none" stroke="#999"/></svg><svg class="st"><use href="#starF"/></svg><svg viewBox="0 0 16 16"><path d="M2.500 1h8l3 3v11h-11zM5 8h6M8.500 5.500L11 8l-2.500 2.500" fill="none" stroke="#222"/></svg><div class="one"><svg><use href="#mon"/></svg><b>1</b></div><svg><use href="#mon"/></svg><svg viewBox="0 0 16 16"><path d="M1 1h14v11h-3v3l-3-3H1zM4 5h8M4 8h5" fill="none" stroke="#111" stroke-width="1.200"/></svg><svg viewBox="0 0 16 16"><path d="M10 0L4 9h4l-2 7 6-9H8.500z" fill="#111"/></svg><svg viewBox="0 0 16 16"><rect x="1" y="3" width="14" height="10" rx="1" fill="none" stroke="#444"/><path d="M3 6h10M3 8.500h10M3 11h10" stroke="#444" stroke-dasharray="1.500 1"/></svg><svg viewBox="0 0 16 16"><path d="M1.500 1.500h13V8q0 5-6.500 7.500Q1.500 13 1.500 8zM8 1.500v14M1.500 7h13" fill="none" stroke="#222"/></svg><svg viewBox="0 0 16 16"><rect x="1" y="1.500" width="14" height="11" rx="1" fill="none" stroke="#111" stroke-width="1.200"/><circle cx="8" cy="7" r="3" fill="#111"/><path d="M5 15h6" stroke="#111"/></svg><svg viewBox="0 0 16 16"><path d="M3 13L8 1l3 1-5 11-3 1zM2 15.500h13" fill="none" stroke="#222"/></svg></div>
    </div>
    <svg class="aham" viewBox="0 0 16 16"><path d="M0 .7h16M0 5.700h16M0 10.700h16M0 15.500h16" stroke="#333"/></svg></div>
  <div class="stage"><div class="remote">
    <div class="rtitle"><div class="qa"><svg><use href="#everest"/></svg><svg><use href="#floppy"/></svg><svg viewBox="0 0 28 28"><use href="#floppy"/><use href="#rx" x="13" y="-1" width="15" height="15"/></svg><svg><use href="#undo"/></svg><svg><use href="#upG"/></svg><svg class="flip"><use href="#upG"/></svg><svg class="car"><use href="#down"/></svg></div><p>21/11/2024 05:51:17 - Contrôle de sous-caisse - Everest 3</p><div class="rw"><svg viewBox="0 0 12 12"><path d="M.5.5h11v11H.5zM.5 3h11M6 11V5M4 7l2-2 2 2" fill="none" stroke="currentColor"/></svg><svg viewBox="0 0 12 12"><path d="M1 6h10" stroke="currentColor" stroke-width="1.300"/></svg><svg><use href="#max"/></svg><svg><use href="#x"/></svg></div></div>
    <div class="rtabs"><svg class="fm" viewBox="0 0 20 14"><path d="M1 .5h11v13H1zM4 .5v13M6 3.500h4M6 6h4M6 8.500h4M6 11h4" fill="none" stroke="#555"/><path d="M14 5.500h6L17 9z" fill="#999"/></svg><a class="on">Accueil</a><a>View</a><a>Tools</a><svg class="mg"><use href="#mag"/></svg><a class="s">Rechercher da...</a></div>
    <div class="ribbon">
      <div class="g" style="width:122px"><div class="bs" style="padding-left:3px"><a style="width:57px"><svg><use href="#bags"/></svg>Saisie des<br>ventes</a><a style="width:57px"><svg><use href="#client"/></svg>Recherche<br>client</a></div><p>Ventes</p></div>
      <div class="g" style="width:167px"><div class="bs"><div class="rs">Recherche article<i></i></div></div><p>Full Text Search</p></div>
      <div class="g" style="width:162px"><div class="bs" style="padding-left:2px"><a style="width:46px"><svg><use href="#floppy"/></svg>Sauver</a><a style="width:52px"><svg viewBox="0 0 28 28"><use href="#floppy"/><use href="#rx" x="14" y="0" width="14" height="14"/></svg>Sauver et<br>Fermer</a><a class="dis" style="width:58px"><svg><use href="#floppyG"/></svg>Sauver et<br>dupliquer</a></div><p>Save</p></div>
      <div class="g" style="width:396px"><div class="bs" style="padding-left:5px"><a style="width:76px"><svg><use href="#printer"/></svg>Imprimer la<br>dernière vente</a><a style="width:76px"><svg><use href="#drawer"/></svg>Ouverture du<br>tiroir caisse</a><a style="width:106px"><svg><use href="#stats"/></svg>Ventes :<br>Quantité/Sous famille</a><a style="width:85px"><svg><use href="#stats"/></svg>Ventes :<br>CA/sous famille</a><a style="width:41px"><svg><use href="#undo"/></svg>Annuler</a></div><p>Edit</p></div>
      <div class="g" style="width:91px"><div class="bs"><a class="dis" style="width:90px"><svg><use href="#obj"/></svg>Ouvrir<br>l'objet</a></div><p>Open Object</p></div>
      <div class="g" style="width:56px"><div class="bs"><a style="width:54px"><svg><use href="#rx"/></svg>Fermer</a></div><p>Close</p></div>
      <div class="g" style="width:176px"><div class="bs"><a class="dis" style="width:67px"><svg><use href="#reset"/></svg>Réinitialiser<br>l'affichage</a><a style="width:104px"><svg><use href="#pages"/></svg>Vues personnalisées<br><svg class="cv"><use href="#chev"/></svg></a></div><p>View</p></div>
      <div class="g" style="width:123px"><div class="bs" style="padding-left:12px"><a class="dis" style="width:54px"><svg><use href="#upG"/></svg>Précédent</a><a class="dis" style="width:46px"><svg class="flip"><use href="#upG"/></svg>Suivant</a></div><p>Records Navigation</p></div>
      <div class="g" style="width:49px"><div class="mini"><div><i class="wl i16"><svg><use href="#brain"/></svg></i><svg class="cv"><use href="#chev"/></svg></div><svg class="bk"><use href="#books"/></svg></div><p>WIL...</p></div>
      <svg class="fold"><use href="#chev"/></svg>
    </div>
    <div class="work">
      <aside>
        <div class="nt">Navigation<svg><use href="#pin"/></svg></div><div class="nc">Caisse</div>
        <div class="ni on"><svg><use href="#sheet"/></svg>Souscaisses</div><div class="ni"><svg><use href="#cal"/></svg>Mouvements de caisse</div><div class="ni"><svg><use href="#bill"/></svg>Billetages</div>
        <div class="ng"><a><svg><use href="#bag"/></svg>Ventes</a><a><svg><use href="#sack"/></svg>Stock</a><a><svg viewBox="0 0 14 14"><path d="M0 0h14v14H0z" fill="#0aa9c8"/></svg>Articles</a><a><svg><use href="#truck"/></svg>Achats</a><a class="on"><svg><use href="#sheet"/></svg>Caisse</a></div>
        <div class="nb"><svg><use href="#stats"/></svg><svg><use href="#gear"/></svg><svg class="dots" viewBox="0 0 20 4"><circle cx="2" cy="2" r="1.800"/><circle cx="10" cy="2" r="1.800"/><circle cx="18" cy="2" r="1.800"/></svg></div>
      </aside>
      <div class="doc">
        <div class="dtabs"><span class="t1"><svg><use href="#sheet"/></svg>Souscaisses</span><span class="t2"><svg><use href="#police"/></svg>21/11/2024 05:51:17 - Contrôle de sous-caisse<em>x</em></span><span class="t3"><svg><use href="#down"/></svg></span></div>
        <div class="dbody">
          <div class="fr"><label style="width:79px">Date de début:</label><div class="fd" style="width:487px">21/11/2024 05:51<svg><use href="#down"/></svg></div><label class="l2">Date de fin:</label><div class="fd" style="width:487px">21/11/2024 12:59<svg><use href="#down"/></svg></div></div>
          <div class="fr"><label style="width:85px">Utilisateur arrêt:</label><div class="fd off" style="width:1056px">JEROME<svg><use href="#down"/></svg></div></div>
          <div class="wiz"><b>Inventaires - Articles comptés</b><span>Saisissez dans la colonne &lt;Stock Fin&gt; la quantité comptée lors de l'arrêt de la caisse.</span></div>
          <div class="hint"><p class="h1">Saisissez les <b>quantités en stock</b> pour les articles suivant <b>au moment de l'arrêt de la caisse.</b></p><p>La quantité réellement vendue sera automatiquement calculée, corrigeant ainsi les éventuelles erreurs de saisie dans la caisse.</p></div>
          <button class="calc"><span>Calcul stock début</span></button>
          <div class="grid">
            <div class="gb">Déposer la colonne de votre choix ICI pour grouper par celle-ci.<svg><use href="#mag"/></svg></div>
            <div class="gr gh"><i></i><span>Article</span><span>Stock Début</span><span>Réceptions</span><span>Mouvements</span><span>Stock Fin</span><span>Vtes Réelles</span><span>Vtes Saisies</span><span>Différence</span><span>Différence C.A.</span></div>
            <div class="gr gv"><i><svg viewBox="0 0 4 8"><path d="M0 0l4 4-4 4z" fill="#777"/></svg></i><span class="a">GAZ CHARGE 12.5 KG (Z)</span><span>31.00</span><span>0.00</span><span>0.00</span><span class="ed">26.00<svg><use href="#down"/></svg></span><span>5.00</span><span>5.00</span><span>0.00</span><span>0.00 €</span></div>
            <div class="ge"></div>
            <div class="gr gf"><i></i><i></i><span>31.00</span><span>0.00</span><span>0.00</span><span>26.00</span><span>5.00</span><span>5.00</span><span>0.00</span><span class="z">0.00 €</span></div>
          </div>
          <hr>
          <div class="pn"><button><svg><use href="#green"/></svg><span>Précédent</span></button><button><svg class="mir"><use href="#green"/></svg><span>Suivant</span></button></div>
        </div>
      </div>
    </div>
    <div class="status"><span>Everest 3.33.15.0|</span><span class="u">Utilisateur : JEROME</span><div class="lights"><i class="red"></i><i></i><i></i></div><svg><use href="#bell"/></svg><span class="n">Aucune notification</span><span class="v">ViTO Saint-Leu</span></div>
    <div class="taskbar far">
      <svg class="wi"><use href="#wind"/></svg><div class="wt"><b>25°C</b><br>Venteux</div>
      <svg class="start"><use href="#win"/></svg><div class="sbox"><svg><use href="#search"/></svg>Rechercher</div>
      <div class="apps"><a><svg><use href="#taskview"/></svg></a><a><svg><use href="#explorer"/></svg></a><a><svg><use href="#chrome"/></svg></a><a><svg><use href="#calc"/></svg></a><a><svg><use href="#outlook"/></svg></a><a class="r on alert"><svg><use href="#any"/></svg></a><a class="r on blue"><svg><use href="#everest"/></svg></a></div>
      <div class="tray"><svg class="tc"><use href="#chev"/></svg><svg class="od" viewBox="0 0 18 12"><use href="#cloud"/><use href="#sync"/></svg><svg class="nw"><use href="#net"/></svg><svg class="so"><use href="#snd"/></svg><div class="clock">13:13<br>21/11/2024</div><svg class="bz"><use href="#bellz"/></svg></div>
    </div>
  </div></div>
  <div class="taskbar local second">
    <svg class="wi"><use href="#sunny"/></svg><div class="wt"><b>30°C</b><br>Eclaircies</div>
    <svg class="start"><use href="#win"/></svg><div class="sbox"><svg><use href="#search"/></svg>Rechercher</div>
    <div class="apps"><a><svg><use href="#taskview"/></svg></a><a><svg><use href="#outlook"/></svg></a><a class="r"><svg><use href="#explorer"/></svg></a><a><svg viewBox="0 0 24 24"><use href="#edge"/><use href="#badgeP"/></svg></a><a class="r"><svg><use href="#pink"/></svg></a><a class="r"><svg><use href="#globe"/></svg></a><a><svg><use href="#store"/></svg></a><a><svg><use href="#winapp"/></svg></a><a class="r"><svg><use href="#dbtool"/></svg></a><a><i class="wl"><svg><use href="#brain"/></svg></i></a><a class="r"><svg><use href="#vs"/></svg></a><a><svg><use href="#vscode"/></svg></a><a class="r"><svg><use href="#teams"/></svg><svg class="okb"><use href="#teamsOk"/></svg></a><a class="r"><svg><use href="#onenote"/></svg></a><a class="r"><svg viewBox="0 0 24 24"><use href="#edge"/><use href="#badgeL"/></svg></a><a class="r"><svg><use href="#excel"/></svg></a><a class="r"><svg><use href="#word"/></svg></a><a class="r on"><svg><use href="#any"/></svg></a><a class="r"><svg><use href="#everest"/></svg></a></div>
    <div class="tray"><svg class="tc"><use href="#chev"/></svg><svg class="od"><use href="#cloud"/></svg><svg class="nw"><use href="#net"/></svg><svg class="so"><use href="#snd"/></svg><div class="clock">13:13<br>21/11/2024</div><svg class="bl"><use href="#bell"/></svg></div>
  </div>
</div>
</body>
</html>
```
FILE: styles.css
```css
* { box-sizing: border-box; margin: 0; padding: 0; }
body { width: 3840px; height: 1080px; display: flex; overflow: hidden; font-family: "Open Sans", "Noto Sans", sans-serif; font-size: 12px; color: #222; white-space: nowrap; }
svg { display: block; flex: none; }
.defs { position: absolute; }
button { font: inherit; letter-spacing: inherit; background: #fff; }
i, em { font-style: normal; }
.monitor { width: 1920px; height: 1080px; display: flex; flex-direction: column; background: #f7f7f7; overflow: hidden; }
.i16 { width: 16px; height: 16px; flex: none; }
.dim { opacity: .5; }
.c-dev { color: #0f78d4; }
.wl { display: block; flex: none; width: 16px; height: 16px; border-radius: 45%; background: conic-gradient(#f3d95a, #8fd16a 60deg, #4fb9c4 110deg, #3b6fc0 160deg, #6b3c96 210deg, #d82c86 270deg, #ef7f9a 320deg, #f3d95a); }
.wl svg { width: 100%; height: 100%; }

/* browser */
.tabstrip { height: 34px; background: #e8e8e8; display: flex; align-items: center; }
.profile { margin-left: 8px; width: 75px; height: 28px; border: 1px solid #444; border-radius: 14px; display: flex; align-items: center; letter-spacing: -.5px; color: #555; }
.leaf { width: 24px; height: 24px; margin: 0 7px 0 1px; }
.ws { width: 16px; height: 16px; margin-left: 19px; }
.vt { width: 16px; height: 16px; margin: 0 19px 0 26px; }
.tab { width: 169.400px; height: 34px; display: flex; align-items: center; padding-left: 6px; position: relative; color: #444; letter-spacing: -.35px; }
.tab::before { content: ""; position: absolute; left: 0; top: 8px; height: 19px; width: 1px; background: #888; }
.tab.on::before, .tab.nosep::before { display: none; }
.tab span { margin-left: 11px; width: 111px; -webkit-mask-image: linear-gradient(90deg, #000 82%, rgba(0,0,0,.15)); mask-image: linear-gradient(90deg, #000 82%, rgba(0,0,0,.15)); }
.tab .cx { width: 10px; height: 10px; margin-left: 5px; color: #333; }
.tab.on { background: #f7f7f7; border-radius: 8px 8px 0 0; }
.acro { background: #12264f; color: #fff; font-size: 13px; line-height: 16px; text-align: center; }
.newtab { border-left: 1px solid #888; height: 19px; padding: 2px 0 0 15px; width: 60px; }
.newtab svg { width: 15px; height: 15px; }
.wbtns { display: flex; gap: 34px; margin-left: 36px; color: #888; }
.wbtns svg { width: 12px; height: 12px; }
.toolbar { height: 40px; display: flex; align-items: center; }
.t-back { width: 18px; height: 16px; margin-left: 19px; color: #333; }
.t-rel { width: 18px; height: 17px; margin-left: 26px; color: #333; }
.addr { margin-left: 20px; width: 1682px; height: 32px; border: 1px solid #c9c9c9; border-radius: 16px; background: #fff; display: flex; align-items: center; color: #777; padding-left: 18px; }
.addr p { font-size: 14px; letter-spacing: -.31px; margin-left: 16px; width: 1520px; }
.addr b { font-weight: 400; color: #111; }
.addr .lk { width: 14px; height: 16px; color: #555; margin: 0; }
.addr svg { width: 16px; height: 16px; margin-right: 24px; }
.t-fav { width: 18px; height: 18px; margin-left: 20px; }
.t-dot { width: 16px; height: 4px; margin-left: 27px; }
.t-cop { width: 23px; height: 23px; margin-left: 22px; }
.bookmarks { height: 34px; padding: 0 15px 2px 12px; display: flex; align-items: center; gap: 16.500px; color: #222; letter-spacing: -.36px; }
.bookmarks a { display: flex; align-items: center; gap: 6px; }
.bookmarks .first { width: 137px; }
.bookmarks svg { width: 16px; height: 16px; }
.bookmarks .other { margin-left: auto; border-left: 1px solid #ccc; padding-left: 14px; }

.page { position: relative; height: 920px; margin: 0 5px 0 4px; background: #e4e4e4; border-radius: 8px; overflow: hidden; color: #b0b0b0; font-size: 14px; letter-spacing: -.42px; display: flex; flex-direction: column; flex: none; }
.arrow { height: 19px; line-height: 22px; padding-left: 1px; color: #aaa; letter-spacing: .3px; }
.phead { height: 62px; background: #ebebeb; border-bottom: 1px solid #d2d2d2; display: flex; align-items: center; padding-left: 40px; }
.burger { width: 18px; height: 16px; }
.vr { width: 1px; height: 33px; background: #d2d2d2; margin: 0 21px 0 20px; }
.logo { width: 41px; height: 47px; opacity: .42; }
.logo svg { width: 41px; height: 47px; }
.brand { margin-left: 10px; display: flex; flex-direction: column; color: #9c9c9c; }
.brand b { font: 500 33px/30px Lato, sans-serif; letter-spacing: -.8px; transform: scaleX(.84); transform-origin: left; width: 114px; }
.brand span { font-size: 11.500px; line-height: 16px; letter-spacing: -.62px; font-weight: 600; }
.pmain { display: flex; flex: 1; padding: 20px 0 0 40px; gap: 20px; }
.side { width: 290px; height: 251px; background: #ebebeb; border: 1px solid #d8d8d8; border-bottom-width: 3px; }
.side h6 { font: 400 12px/35px "Open Sans"; height: 36px; padding-left: 24px; color: #cdcdcd; border-bottom: 1px solid #d8d8d8; letter-spacing: -.29px; }
.side h6:last-child { border: 0; }
.side a { display: block; height: 32px; line-height: 31px; margin: 4px 4px 0; padding-left: 17px; }
.side a + a { margin-top: 1px; line-height: 28px; }
.side a.on { background: #adc7df; color: #eee; border-radius: 2px; }
.side a.last { height: 35px; line-height: 30px; border-bottom: 1px solid #d8d8d8; margin: 0; padding-left: 21px; }
.detail small, .pop2 small { display: block; font-size: 14px; line-height: 16px; letter-spacing: -.4px; color: #c0c0c0; }
h2 { font-size: 22px; font-weight: 400; line-height: 26px; letter-spacing: -.05px; color: #b3b3b3; }
.detail h2, .pop2 h2 { font-size: 22.500px; letter-spacing: .22px; }
.detail { width: 700px; }
.detail h2 { margin-bottom: 15px; }
.panel { background: #ebebeb; border: 1px solid #d5d5d5; }
.detail .panel { height: 461px; padding: 22px 0 0 30px; }
.box { border: 1px solid #d5d5d5; height: 400px; }
.ptabs { display: flex; height: 93px; }
.ptabs span { width: 88px; height: 39px; display: flex; align-items: center; justify-content: center; border-right: 1px solid #d8d8d8; border-bottom: 1px solid #d8d8d8; }
.ptabs .cur { width: 147px; border-bottom: 0; gap: 6px; }
.ptabs .cur svg { width: 13px; height: 16px; opacity: .5; }
.ptabs .ct { width: 140px; justify-content: flex-start; padding-left: 19px; gap: 5px; }
.ct em { width: 17px; height: 17px; border-radius: 9px; background: #b9b9b9; color: #eee; font-size: 12px; text-align: center; line-height: 17px; }
.tbl { display: grid; grid-template-columns: 43px 82px 129px 1fr; grid-template-rows: 38px 54px 45px 45px 46px; border-top: 1px solid #d2d2d2; border-bottom: 1px solid #d2d2d2; line-height: 19px; overflow: hidden; }
.tbl > div { border-right: 1px solid #d8d8d8; display: flex; align-items: center; padding-left: 10px; }
.tbl .th { font-size: 12px; letter-spacing: -.31px; background: #e8e8e8; color: #c4c4c4; }
.tbl i { width: 20px; height: 20px; border: 1px solid #d2d2d2; }
.tbl .th svg { width: 12px; height: 12px; margin-left: 6px; }
.pager { display: flex; gap: 4px; padding: 11px 0 0 7px; height: 65px; }
.pager span, .pager b { width: 49px; height: 36px; border: 1px solid #d8d8d8; border-radius: 2px; display: flex; align-items: center; justify-content: center; font-weight: 400; color: #ccc; }
.pager b { width: 34px; background: #adc7df; border: 0; color: #eee; }
.pager svg { width: 13px; height: 8px; }
.l { transform: rotate(-90deg); }
svg.r { transform: rotate(90deg); }
.hscroll { display: flex; align-items: center; height: 9px; gap: 8px; padding-left: 8px; }
.hscroll svg { width: 7px; height: 9px; }
.hscroll i { height: 9px; flex: 1; background: #c8c8c8; border-radius: 5px 0 0 5px; }
footer { height: 50px; background: #b5b5b5; color: #d9d9d9; padding: 6px 0 0 40px; line-height: 19px; }
.pop2 { position: absolute; left: 573px; top: 0; width: 410px; height: 920px; background: #e4e4e4; border: 1px solid #aaa; border-width: 1px 0 0 1px; box-shadow: -2px 0 14px rgba(0,0,0,.3); overflow: visible; }
.pop2 header { height: 61px; background: #ebebeb; border-bottom: 1px solid #d2d2d2; padding: 12px 0 0 20px; }
.pop2 h2 { line-height: 27px; }
.pop2 .panel { margin-top: 51px; height: 436px; border: 0; padding: 18px 0 0 60px; overflow: hidden; }
.pop3 { position: absolute; left: 976px; top: 1px; width: 934px; height: 920px; background: #fff; border-radius: 0 4px 8px 0; box-shadow: 0 0 0 1px #a9a9a9, 0 -1px 0 1px #b4b4b4, -3px 0 14px rgba(0,0,0,.35); color: #3c3c3c; }
.pop3 header { height: 62px; background: #f7f7f7; border-bottom: 1px solid #c4c4c4; display: flex; align-items: center; padding: 0 31px 0 20px; }
.pop3 h2 { color: #444; flex: 1; padding-top: 5px; }
.pop3 button { color: #2c86d3; border: 1px solid #c4c4c4; border-radius: 3px; }
.pop3 header button { width: 86px; height: 38px; margin-top: 0; }
.pop3 header .ok { width: 64px; background: #2c86d3; color: #fff; border: 0; margin-right: 6px; }
.pop3 h3 { font-size: 20px; font-weight: 400; letter-spacing: -.8px; line-height: 28px; margin: 63px 0 0 30px; }
.form { display: grid; grid-template-columns: 401px 1fr; padding: 18px 0 0 30px; }
dt { font-size: 12px; letter-spacing: -.3px; height: 20px; line-height: 20px; color: #8e8e8e; }
dd { height: 29px; line-height: 20px; }
dd u { color: #999; }
.form .gap1 { height: 24px; }
.chk { display: flex; align-items: center; gap: 9px; color: #8e8e8e; height: 51px; padding-bottom: 21px; line-height: 30px; }
.chk svg { width: 30px; height: 30px; border: 1px solid #c4c4c4; }
dd.pw { height: 64px; padding: 20px 0 0 1px; }
.pw button { width: 135px; height: 30px; }

/* taskbars */
.taskbar { height: 48px; background: #cfe8ee; border-top: 1px solid #9fb4ba; display: flex; align-items: center; margin-top: auto; flex: none; color: #333; }
.wi { width: 24px; height: 24px; margin-left: 20px; }
.wt { width: 375px; padding-left: 6px; line-height: 16px; letter-spacing: -.3px; color: #555; }
.wt b { font-weight: 400; color: #222; }
.start { width: 23px; height: 23px; }
.sbox { margin-left: 14px; width: 218px; height: 31px; border-radius: 16px; background: #f0f7fa; border-bottom: 1px solid #b5ccd2; display: flex; align-items: center; padding-left: 10px; gap: 11px; font-size: 14px; letter-spacing: -.6px; color: #555; }
.sbox svg { width: 16px; height: 16px; color: #222; }
.apps { display: flex; margin-left: 2px; }
.apps a { width: 44px; height: 48px; display: flex; align-items: center; justify-content: center; position: relative; }
.apps a > svg, .apps .wl { width: 24px; height: 24px; position: relative; }
.apps a::after { content: ""; position: absolute; left: 19px; bottom: 5px; }
.apps .r::after { width: 6px; height: 3px; border-radius: 2px; background: #7c898d; }
.apps .on::before { content: ""; position: absolute; inset: 5px 3px; background: #e8f3f7; border-radius: 4px; }
.apps .on::after { left: 14px; width: 16px; background: #1f8699; }
.apps .alert::before { background: #e9abab; }
.apps .alert::after { width: 24px; left: 10px; background: #7d5555; }
.apps .blue::after { background: #0078d4; }
.apps a > .okb { position: absolute; width: 16px; height: 16px; left: 24px; top: 5px; }
.tray { margin-left: auto; display: flex; align-items: center; padding-right: 23px; }
.clock { text-align: right; line-height: 16px; letter-spacing: -.17px; }
.second .tray { padding-right: 21px; }
.tc { width: 11px; height: 7px; margin-right: 18px; }
.od { width: 17px; height: 12px; margin-right: 15px; }
.nw { width: 17px; height: 17px; margin-right: 6px; }
.so { width: 17px; height: 15px; margin-right: 17px; }
.bl { width: 14px; height: 16px; margin-left: 8px; color: #17495a; }

/* AnyDesk */
.any { background: #eaeaea; }
.atitle { height: 37px; display: flex; align-items: center; padding-left: 6px; }
.alogo { width: 24px; height: 18px; }
.atitle > b { font-weight: 600; font-size: 14px; margin-left: 6px; width: 71px; letter-spacing: .1px; }
.atab { width: 158px; height: 26px; background: #fff; border-radius: 3px; display: flex; align-items: center; padding-left: 9px; gap: 5px; color: #555; font-size: 12.500px; letter-spacing: 0; }
.atab svg { width: 16px; height: 16px; color: #222; }
.anew { width: 17px; height: 16px; margin: 3px 0 0 8px; }
.aw { margin-left: auto; display: flex; align-items: center; gap: 33px; padding-right: 15px; color: #333; }
.aw svg { width: 12px; height: 12px; }
.aw .ava { width: 24px; height: 24px; margin-right: 6px; }
.abar { height: 43px; border-bottom: 1px solid #fff; display: flex; align-items: center; padding-left: 8px; }
.aok { width: 16px; height: 16px; }
.ain { margin-left: 8px; width: 1843px; height: 31px; margin-top: 0; border: 2px solid #c4c4c4; border-radius: 4px; background: #fff; display: flex; align-items: center; padding-left: 9px; flex: none; }
.gm { width: 16px; height: 16px; }
.ain > span { margin-left: 9px; border-left: 1px solid #ccc; padding-left: 9px; font-size: 14px; letter-spacing: 0; color: #111; }
.aic { margin-left: auto; display: flex; gap: 16px; padding-right: 7px; }
.aic svg { width: 16px; height: 16px; color: #111; }
.aic .st { margin: 0 9px 0 -3px; }
.one { position: relative; width: 16px; height: 16px; }
.one b { position: absolute; inset: -1px 0 0; text-align: center; font-size: 10px; line-height: 16px; font-weight: 600; color: #111; }
.one::after { content: ""; position: absolute; left: -6px; top: 21px; width: 28px; height: 2px; background: #ef443b; }
.aham { width: 16px; height: 16px; margin-left: 15px; }
.stage { height: 952px; background: linear-gradient(#6e6e6e 75%, #505050); padding: 92px 0 0 277px; flex: none; }
.remote { width: 1366px; height: 768px; background: #f0f0f0; border-left: 1px solid #333; border-right: 3px solid #0a00f5; border-bottom: 1px solid #333; display: flex; flex-direction: column; font-family: "DejaVu Sans Condensed", "DejaVu Sans", sans-serif; font-size: 10.600px; color: #3b3b3b; }
.rtitle { height: 36px; flex: none; background: #106ebe; color: #fff; display: grid; grid-template-columns: 200px 1fr 200px; align-items: center; border-top: 1px solid #333; }
.rtitle p { text-align: center; letter-spacing: .06px; }
.qa { display: flex; align-items: center; gap: 8px; padding-left: 8px; }
.qa svg { width: 16px; height: 16px; }
.qa .car { width: 6px; height: 4px; margin-left: 8px; }
.flip { transform: rotate(180deg); }
.rw { display: flex; gap: 36px; justify-content: flex-end; padding-right: 14px; }
.rw svg { width: 12px; height: 12px; }
.rtabs { height: 30px; flex: none; display: flex; align-items: center; font-size: 13px; }
.fm { width: 20px; height: 14px; margin: 0 33px 0 15px; }
.rtabs a { height: 26px; line-height: 24px; margin: 4px 34px 0 0; padding-top: 0; }
.rtabs a.on { border-bottom: 3px solid #106ebe; letter-spacing: -.1px; }
.rtabs a.s { letter-spacing: .2px; }
.mg { width: 12px; height: 14px; margin: 0 6px 0 -13px; }
.ribbon { height: 92px; flex: none; display: flex; border-bottom: 1px solid #ccc; position: relative; letter-spacing: -.05px; }
.g { height: 88px; border-right: 1px solid #d0d0d0; display: flex; flex-direction: column; flex: none; }
.g > p { text-align: center; margin-top: auto; line-height: 11px; }
.bs { display: flex; height: 68px; }
.bs a { text-align: center; line-height: 13px; padding-top: 6px; flex: none; }
.bs a > svg { width: 28px; height: 28px; margin: 0 auto 7px; }
.bs .cv, .cv { width: 8px; height: 5px; margin: 4px auto; transform: rotate(180deg); }
.bs a > .cv { width: 8px; height: 5px; margin: 4px auto; }
.dis { color: #8b8b8b; }
.rs { width: 150px; height: 20px; margin: 25px 0 0 9px; border: 1px solid #bbb; background: #fff; color: #777; line-height: 18px; padding: 1px 3px 1px 4px; display: flex; align-items: center; justify-content: space-between; }
.rs i { width: 15px; height: 14px; background: #0aa9c8; }
.mini { padding: 11px 0 0 9px; display: flex; flex-direction: column; gap: 16px; }
.mini > div { display: flex; align-items: center; }
.bk { width: 15px; height: 14px; }
.fold { width: 10px; height: 6px; margin: auto 0 10px 9px; }
.work { display: flex; flex: 1; background: #f8f8f8; padding: 2px 0 3px 1px; gap: 4px; min-height: 0; }
aside { width: 196px; border: 1px solid #d0d0d0; display: flex; flex-direction: column; padding: 0 1px; }
.nt { height: 44px; font-size: 18px; display: flex; align-items: center; justify-content: space-between; padding: 0 20px 0 11px; }
.nt svg { width: 8px; height: 10px; }
.nc { height: 31px; font-size: 15px; line-height: 31px; padding-left: 7px; }
.ni { height: 70px; text-align: center; padding-top: 11px; line-height: 28px; }
.ni.on { background: #cde6f7; }
.ni svg { width: 28px; height: 28px; margin: 0 auto; }
.ng { margin-top: auto; border-top: 1px solid #d0d0d0; border-bottom: 1px solid #d0d0d0; }
.ng a { height: 34px; display: flex; align-items: center; gap: 7px; padding: 2px 0 0 9px; font-size: 15px; letter-spacing: .08px; }
.ng a.on { background: #dcdcdc; }
.ng svg { width: 14px; height: 14px; }
.nb { height: 42px; display: flex; align-items: center; justify-content: flex-end; gap: 27px; padding-right: 10px; }
.nb svg { width: 15px; height: 14px; }
.nb .dots { width: 20px; height: 4px; fill: #777; margin-left: -3px; }
.doc { flex: 1; display: flex; flex-direction: column; }
.dtabs { height: 27px; display: flex; flex: none; }
.dtabs span { display: flex; align-items: center; gap: 5px; border-bottom: 1px solid #d0d0d0; }
.t1 { width: 118px; padding-left: 12px; letter-spacing: -.1px; }
.dtabs .t1 svg { width: 14px; height: 14px; }
.dtabs .t2 { width: 290px; border: 1px solid #d0d0d0; border-top: 2px solid #106ebe; border-bottom: 0; color: #106ebe; padding-left: 12px; gap: 4px; letter-spacing: .05px; }
.t2 svg { width: 14px; height: 12px; }
.t2 em { margin-left: auto; margin-right: 10px; color: #555; font-size: 12px; }
.t3 { flex: 1; justify-content: flex-end; padding-right: 6px; }
.t3 svg { width: 6px; height: 4px; }
.dbody { flex: 1; border: 1px solid #d0d0d0; border-top: 0; padding-left: 9px; }
.fr { display: flex; padding-top: 10px; height: 30px; line-height: 19px; }
.fr label { letter-spacing: -.1px; }
.fd { height: 20px; border: 1px solid #ccc; padding: 0 4px; display: flex; justify-content: space-between; align-items: center; }
.fd svg { width: 6px; height: 4px; color: #777; }
.fd.off svg { color: #c4c4c4; }
.l2 { margin-left: 25px; width: 63px; }
.wiz { background: #fff; width: 1056px; height: 66px; margin: 4px 0 0 85px; border-bottom: 1px solid #ccc; padding: 15px 0 0 16px; line-height: 16px; display: flex; flex-direction: column; }
.wiz b { letter-spacing: -.1px; }
.wiz span { padding-left: 31px; letter-spacing: -.01px; }
.hint { margin: 29px 0 0 112px; color: #7d7d7d; line-height: 13px; letter-spacing: -.03px; }
.hint b { letter-spacing: -.1px; }
.calc { margin: 5px 0 0 113px; width: 97px; height: 23px; border: 2px solid #1667ad; display: block; color: #333; }
.calc span { display: block; border: 1px dotted #333; line-height: 17px; letter-spacing: -.15px; }
.grid { width: 1000px; height: 208px; margin: 4px 0 0 113px; border: 1px solid #a5a5a5; background: #fff; }
.gb { height: 32px; background: #f0f0f0; display: flex; justify-content: space-between; align-items: center; padding: 0 4px; color: #6e6e6e; }
.gb svg { width: 15px; height: 15px; color: #444; }
.gr { display: grid; grid-template-columns: 23px 174px 98px 87px 87px 98px 98px 98px 98px 137px; }
.gh { height: 24px; border: 1px solid #a5a5a5; border-width: 1px 0; background: #f8f8f8; color: #777; line-height: 22px; }
.gh span { border-left: 1px solid #a5a5a5; padding-left: 4px; line-height: 18px; margin: 2px 0; }
.gv { height: 21px; line-height: 20px; border-bottom: 1px solid #ccc; text-align: right; }
.gv i svg { width: 4px; height: 8px; margin: 6px 9px; }
.gv span { background: #e5e5e5; border-left: 1px solid #c4c4c4; padding-right: 4px; }
.gv .a { text-align: left; padding-left: 4px; }
.gv .ed { background: #fff; display: flex; justify-content: flex-end; align-items: center; gap: 8px; padding-right: 5px; }
.ed svg { width: 6px; height: 4px; color: #777; }
.ge { height: 92px; border-bottom: 1px solid #c4c4c4; }
.gf { text-align: right; line-height: 24px; padding-top: 7px; }
.gf span { background: #f0f0f0; margin-left: 2px; padding-right: 4px; }
.gf .z { margin-right: 6px; padding-right: 3px; }
.dbody hr { border: 0; border-top: 1px solid #ccc; width: 1056px; margin: 28px 0 0 85px; }
.pn { display: flex; gap: 4px; margin: 11px 0 0 890px; }
.pn button { width: 75px; height: 22px; border: 1px solid #adadad; display: flex; align-items: center; color: #3b3b3b; padding-left: 2px; }
.pn svg { width: 15px; height: 15px; }
.pn span { flex: 1; text-align: center; letter-spacing: -.1px; }
.mir { transform: scaleX(-1); }
.status { height: 22px; flex: none; border-top: 1px solid #d0d0d0; display: flex; align-items: center; padding: 0 7px 0 7px; }
.status .u { margin-left: 16px; }
.lights { margin-left: auto; display: flex; gap: 7px; }
.lights i { width: 18.500px; height: 18.500px; border: 1.500px solid #222; border-radius: 50%; background: linear-gradient(#aaa 50%, #808080 50%); }
.lights .red { background: linear-gradient(#e79a8c 50%, #e4552c 50%); }
.status svg { width: 14px; height: 15px; color: #b5b5b5; margin: 0 5px 0 17px; }
.status .n { color: #8b8b8b; margin-right: 16px; letter-spacing: -.15px; }
.status .v { letter-spacing: -.15px; }
.far { background: linear-gradient(90deg, #d3e8f5, #cfe9ef 35%, #d4e6f2 60%, #d9e3e8 67%, #cfe4f3); font-family: "Open Sans", sans-serif; font-size: 12px; letter-spacing: -.3px; }
.far .wi { margin-left: 17px; }
.far .wt { padding-left: 9px; width: 364px; }
.far .apps { margin-left: 3px; }
.far .tc { margin-right: 19px; }
.far .so { margin-right: 16px; }
.bz { width: 15px; height: 17px; margin-left: 9px; }
.far .tray { padding-right: 17px; }
```
